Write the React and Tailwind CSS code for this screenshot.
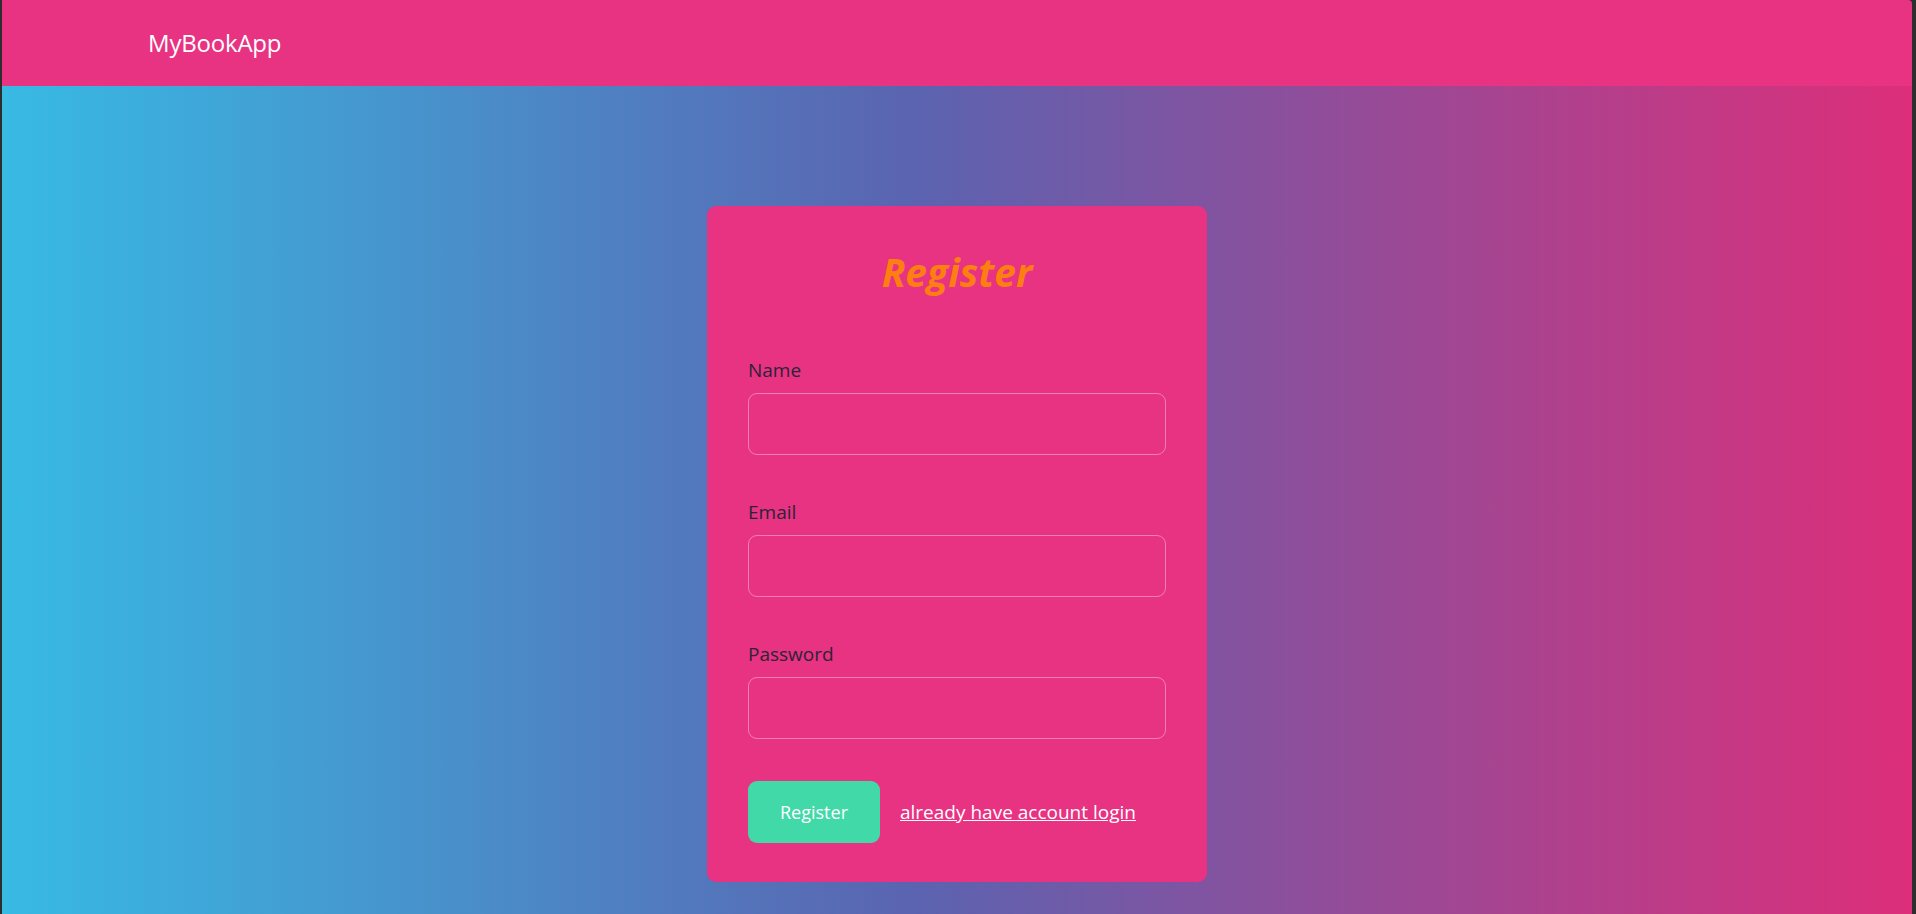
import React from 'react';

const Field = ({ label, type = 'text' }) => (
  <div className="flex flex-col">
    <label className="text-[19px] leading-[24px] text-[#2b2437] mb-[11px]">{label}</label>
    <input
      type={type}
      className="h-[62px] w-full rounded-[9px] border border-[#f27fb3] bg-transparent px-3 outline-none"
    />
  </div>
);

export default function App() {
  return (
    <div
      className="flex h-[914px] w-[1916px] bg-[#2e2e2e] pl-[2px] pr-[4px]"
      style={{ fontFamily: '"Open Sans", "Noto Sans", sans-serif' }}
    >
      <div className="flex flex-1 flex-col overflow-hidden rounded-tr-[4px]">
        {/* Navbar */}
        <header className="flex h-[86px] items-center bg-[#e83282] pl-[146px]">
          <span className="text-[24px] text-white tracking-[-0.2px]">MyBookApp</span>
        </header>

        {/* Main */}
        <main className="flex flex-1 justify-center bg-[linear-gradient(to_right,#37bae4,#5b63b0_48%,#dd2e7a)] pt-[120px]">
          <div className="h-[676px] w-[500px] rounded-[9px] bg-[#e83282] px-[41px] pt-[42px]">
            <h1 className="text-center text-[39px] font-bold italic leading-[48px] text-[#fd7f12]">Register</h1>

            <div className="mt-[62px] flex flex-col gap-[45px]">
              <Field label="Name" />
              <Field label="Email" type="email" />
              <Field label="Password" type="password" />
            </div>

            <div className="mt-[42px] flex items-center gap-[20px]">
              <button className="h-[62px] w-[132px] rounded-[9px] bg-[#42d9a8] text-[18px] text-white">Register</button>
              <a href="#" className="text-[19px] text-white underline">already have account login</a>
            </div>
          </div>
        </main>
      </div>
    </div>
  );
}
